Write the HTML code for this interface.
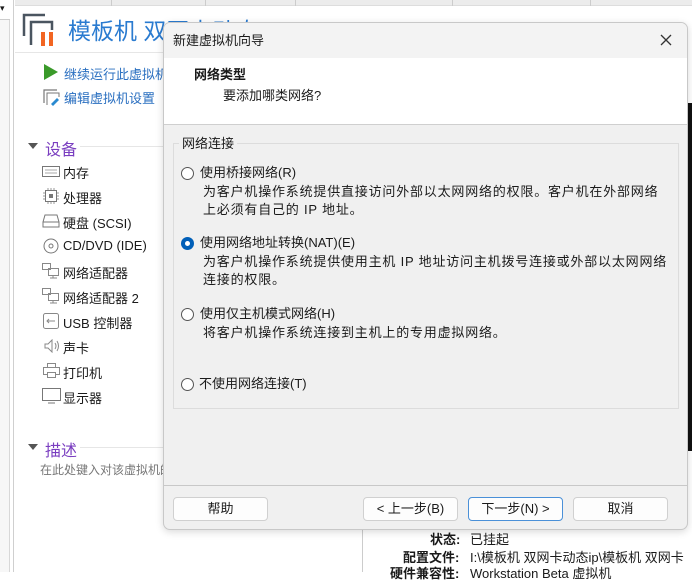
<!DOCTYPE html>
<html><head><meta charset="utf-8"><style>
*{margin:0;padding:0;box-sizing:border-box}
body{width:692px;height:572px;overflow:hidden;background:#fff;font-family:"Liberation Sans","Noto Sans CJK SC",sans-serif;font-size:13px;color:#1a1a1a;position:relative}
.abs{position:absolute}
.t{position:absolute;white-space:nowrap}
.d{letter-spacing:.8px}
</style></head><body>
<div class="abs" style="left:0;top:0;width:10px;height:572px;background:#f7f7f7;border-right:1px solid #d8d8d8"></div>
<div class="abs" style="left:10px;top:0;width:4px;height:572px;background:#fff;border-right:1px solid #cfcfcf"></div>
<div class="abs" style="left:0;top:0;width:10px;height:20px;background:#fff;border-bottom:1px solid #ccc"></div>
<div class="t" style="left:0;top:3px;font-size:9px">▾</div>
<div class="abs" style="left:15px;top:0;width:677px;height:6px;background:#ececec;border-bottom:1px solid #ddd"></div>
<div class="abs" style="left:111px;top:0;width:1px;height:6px;background:#ccc"></div>
<div class="abs" style="left:205px;top:0;width:1px;height:6px;background:#ccc"></div>
<div class="abs" style="left:295px;top:0;width:1px;height:6px;background:#ccc"></div>
<div class="abs" style="left:452px;top:0;width:1px;height:6px;background:#ccc"></div>
<div class="abs" style="left:590px;top:0;width:1px;height:6px;background:#ccc"></div>
<svg class="abs" style="left:22px;top:12px" width="36" height="36" viewBox="0 0 36 36">
<path d="M2 24V3h21" fill="none" stroke="#4a5560" stroke-width="2.5"/>
<path d="M9 33V10h21v8" fill="none" stroke="#4a5560" stroke-width="2.5"/>
<rect x="19" y="20" width="4" height="14" fill="#f26522"/><rect x="27" y="20" width="4" height="14" fill="#f26522"/>
</svg>
<div class="t" style="left:68px;top:12px;font-size:23px;color:#2a7bd0">模板机 双网卡动态ip</div>
<div class="abs" style="left:15px;top:52px;width:160px;height:1px;background:#e6e6e6"></div>
<svg class="abs" style="left:44px;top:64px" width="14" height="16"><path d="M0 0L14 8L0 16Z" fill="#3a9a2a"/></svg>
<div class="t" style="left:64px;top:64px;color:#2a6fc0">继续运行此虚拟机</div>
<svg class="abs" style="left:43px;top:89px" width="17" height="17"><path d="M1 14V1h13" fill="none" stroke="#777" stroke-width="1.2"/><path d="M4 16V4h12v4" fill="none" stroke="#777"/><path d="M8 15l6-6 2 2-6 6z" fill="#2a8ad0"/></svg>
<div class="t" style="left:64px;top:88px;color:#2a6fc0">编辑虚拟机设置</div>
<svg class="abs" style="left:28px;top:143px" width="10" height="6"><path d="M0 0h10L5 6z" fill="#555"/></svg>
<div class="t" style="left:45px;top:136px;font-size:16px;color:#7a3ec0">设备</div>
<div class="abs" style="left:80px;top:146px;width:90px;height:1px;background:#e6e6e6"></div>
<svg class="abs" style="left:42px;top:166px" width="18" height="12"><rect x=".5" y=".5" width="17" height="10" fill="none" stroke="#777"/><path d="M3 4h12M3 7h12" stroke="#aaa"/></svg>
<div class="t" style="left:63px;top:163px">内存</div>
<svg class="abs" style="left:43px;top:188px" width="16" height="16"><rect x="2.5" y="2.5" width="11" height="11" fill="none" stroke="#777"/><rect x="6" y="6" width="4" height="4" fill="#777"/><path d="M0 5h2M0 8h2M0 11h2M14 5h2M14 8h2M14 11h2M5 0v2M8 0v2M11 0v2M5 14v2M8 14v2M11 14v2" stroke="#999"/></svg>
<div class="t" style="left:63px;top:188px">处理器</div>
<svg class="abs" style="left:42px;top:214px" width="18" height="14"><path d="M3 1h12l2 7v5H1V8z" fill="none" stroke="#777"/><path d="M1 8h16" stroke="#777"/></svg>
<div class="t" style="left:63px;top:213px">硬盘 (SCSI)</div>
<svg class="abs" style="left:43px;top:238px" width="16" height="16"><circle cx="8" cy="8" r="7" fill="none" stroke="#777"/><circle cx="8" cy="8" r="2" fill="none" stroke="#777"/></svg>
<div class="t" style="left:63px;top:238px">CD/DVD (IDE)</div>
<svg class="abs" style="left:42px;top:263px" width="18" height="16"><rect x=".5" y=".5" width="8" height="6" fill="none" stroke="#888"/><rect x="6.5" y="5.5" width="10" height="7" fill="none" stroke="#888"/><path d="M11 12v3M8 15h7" stroke="#888"/></svg>
<div class="t" style="left:63px;top:263px">网络适配器</div>
<svg class="abs" style="left:42px;top:288px" width="18" height="16"><rect x=".5" y=".5" width="8" height="6" fill="none" stroke="#888"/><rect x="6.5" y="5.5" width="10" height="7" fill="none" stroke="#888"/><path d="M11 12v3M8 15h7" stroke="#888"/></svg>
<div class="t" style="left:63px;top:288px">网络适配器 2</div>
<svg class="abs" style="left:43px;top:313px" width="16" height="16"><rect x=".5" y=".5" width="15" height="15" rx="2" fill="none" stroke="#888"/><path d="M4 8h8M6 6l-2 2 2 2" stroke="#888" fill="none"/></svg>
<div class="t" style="left:63px;top:313px">USB 控制器</div>
<svg class="abs" style="left:44px;top:339px" width="16" height="14"><path d="M1 5h3l4-4v12l-4-4H1z" fill="none" stroke="#888"/><path d="M11 4q2 3 0 6M13 2q3 5 0 10" fill="none" stroke="#888"/></svg>
<div class="t" style="left:63px;top:338px">声卡</div>
<svg class="abs" style="left:43px;top:363px" width="17" height="16"><rect x="4.5" y=".5" width="8" height="4" fill="none" stroke="#888"/><rect x=".5" y="4.5" width="16" height="7" fill="none" stroke="#888"/><rect x="4.5" y="9.5" width="8" height="5" fill="#fff" stroke="#888"/></svg>
<div class="t" style="left:63px;top:363px">打印机</div>
<svg class="abs" style="left:42px;top:388px" width="19" height="16"><rect x=".5" y=".5" width="18" height="12" fill="none" stroke="#777"/><path d="M6 15h7" stroke="#777"/></svg>
<div class="t" style="left:63px;top:388px">显示器</div>
<svg class="abs" style="left:28px;top:444px" width="10" height="6"><path d="M0 0h10L5 6z" fill="#555"/></svg>
<div class="t" style="left:45px;top:437px;font-size:16px;color:#7a3ec0">描述</div>
<div class="abs" style="left:80px;top:447px;width:90px;height:1px;background:#e6e6e6"></div>
<div class="t" style="left:40px;top:461px;font-size:12px;color:#777">在此处键入对该虚拟机的描述。</div>
<div class="abs" style="left:685px;top:103px;width:7px;height:348px;background:#111"></div>
<div class="abs" style="left:362px;top:530px;width:1px;height:42px;background:#ccc"></div>
<div class="t" style="left:430px;top:529px;font-weight:bold">状态:</div>
<div class="t" style="left:470px;top:529px">已挂起</div>
<div class="t" style="left:403px;top:547px;font-weight:bold">配置文件:</div>
<div class="t" style="left:470px;top:547px">I:\模板机 双网卡动态ip\模板机 双网卡</div>
<div class="t" style="left:390px;top:563px;font-weight:bold">硬件兼容性:</div>
<div class="t" style="left:470px;top:563px">Workstation Beta 虚拟机</div>
<div class="abs" style="left:163px;top:22px;width:525px;height:508px;background:#f0f0f0;border:1px solid #c8c8c8;border-radius:7px;overflow:hidden;box-shadow:0 2px 8px rgba(0,0,0,.15)">
 <div class="abs" style="left:0;top:0;width:525px;height:35px;background:#f3f3f3"></div>
 <div class="t" style="left:9px;top:7px;font-size:13px">新建虚拟机向导</div>
 <svg class="abs" style="left:496px;top:11px" width="12" height="12"><path d="M1 1l10 10M11 1L1 11" stroke="#333" stroke-width="1.3"/></svg>
 <div class="abs" style="left:0;top:35px;width:525px;height:67px;background:#fff;border-bottom:1px solid #cfcfcf"></div>
 <div class="t" style="left:30px;top:41px;font-weight:bold">网络类型</div>
 <div class="t" style="left:59px;top:62px">要添加哪类网络?</div>
 <div class="abs" style="left:9px;top:120px;width:506px;height:266px;border:1px solid #dcdcdc"></div>
 <div class="t" style="left:15px;top:110px;background:#f0f0f0;padding:0 3px">网络连接</div>
 <div class="abs" style="left:17px;top:144px;width:13px;height:13px;border:1px solid #555;border-radius:50%;background:#fff"></div>
 <div class="t" style="left:36px;top:139px">使用桥接网络(R)</div>
 <div class="t d" style="left:39px;top:158px">为客户机操作系统提供直接访问外部以太网网络的权限。客户机在外部网络</div>
 <div class="t d" style="left:39px;top:176px">上必须有自己的 IP 地址。</div>
 <div class="abs" style="left:17px;top:214px;width:13px;height:13px;border-radius:50%;background:#005fb8"></div>
 <div class="abs" style="left:21px;top:218px;width:5px;height:5px;border-radius:50%;background:#fff"></div>
 <div class="t" style="left:36px;top:209px">使用网络地址转换(NAT)(E)</div>
 <div class="t d" style="left:39px;top:228px">为客户机操作系统提供使用主机 IP 地址访问主机拨号连接或外部以太网网络</div>
 <div class="t d" style="left:39px;top:246px">连接的权限。</div>
 <div class="abs" style="left:17px;top:285px;width:13px;height:13px;border:1px solid #555;border-radius:50%;background:#fff"></div>
 <div class="t" style="left:36px;top:280px">使用仅主机模式网络(H)</div>
 <div class="t d" style="left:39px;top:299px">将客户机操作系统连接到主机上的专用虚拟网络。</div>
 <div class="abs" style="left:17px;top:355px;width:13px;height:13px;border:1px solid #555;border-radius:50%;background:#fff"></div>
 <div class="t" style="left:35px;top:350px">不使用网络连接(T)</div>
 <div class="abs" style="left:0;top:462px;width:525px;height:1px;background:#c8c8c8"></div>
 <div class="abs" style="left:9px;top:474px;width:95px;height:24px;background:#fdfdfd;border:1px solid #d0d0d0;border-radius:4px;text-align:center;line-height:21px">帮助</div>
 <div class="abs" style="left:199px;top:474px;width:95px;height:24px;background:#fdfdfd;border:1px solid #d0d0d0;border-radius:4px;text-align:center;line-height:21px">&lt; 上一步(B)</div>
 <div class="abs" style="left:304px;top:474px;width:95px;height:24px;background:#fdfdfd;border:1px solid #4a90d8;border-radius:4px;text-align:center;line-height:21px">下一步(N) &gt;</div>
 <div class="abs" style="left:409px;top:474px;width:95px;height:24px;background:#fdfdfd;border:1px solid #d0d0d0;border-radius:4px;text-align:center;line-height:21px">取消</div>
</div>
</body></html>
